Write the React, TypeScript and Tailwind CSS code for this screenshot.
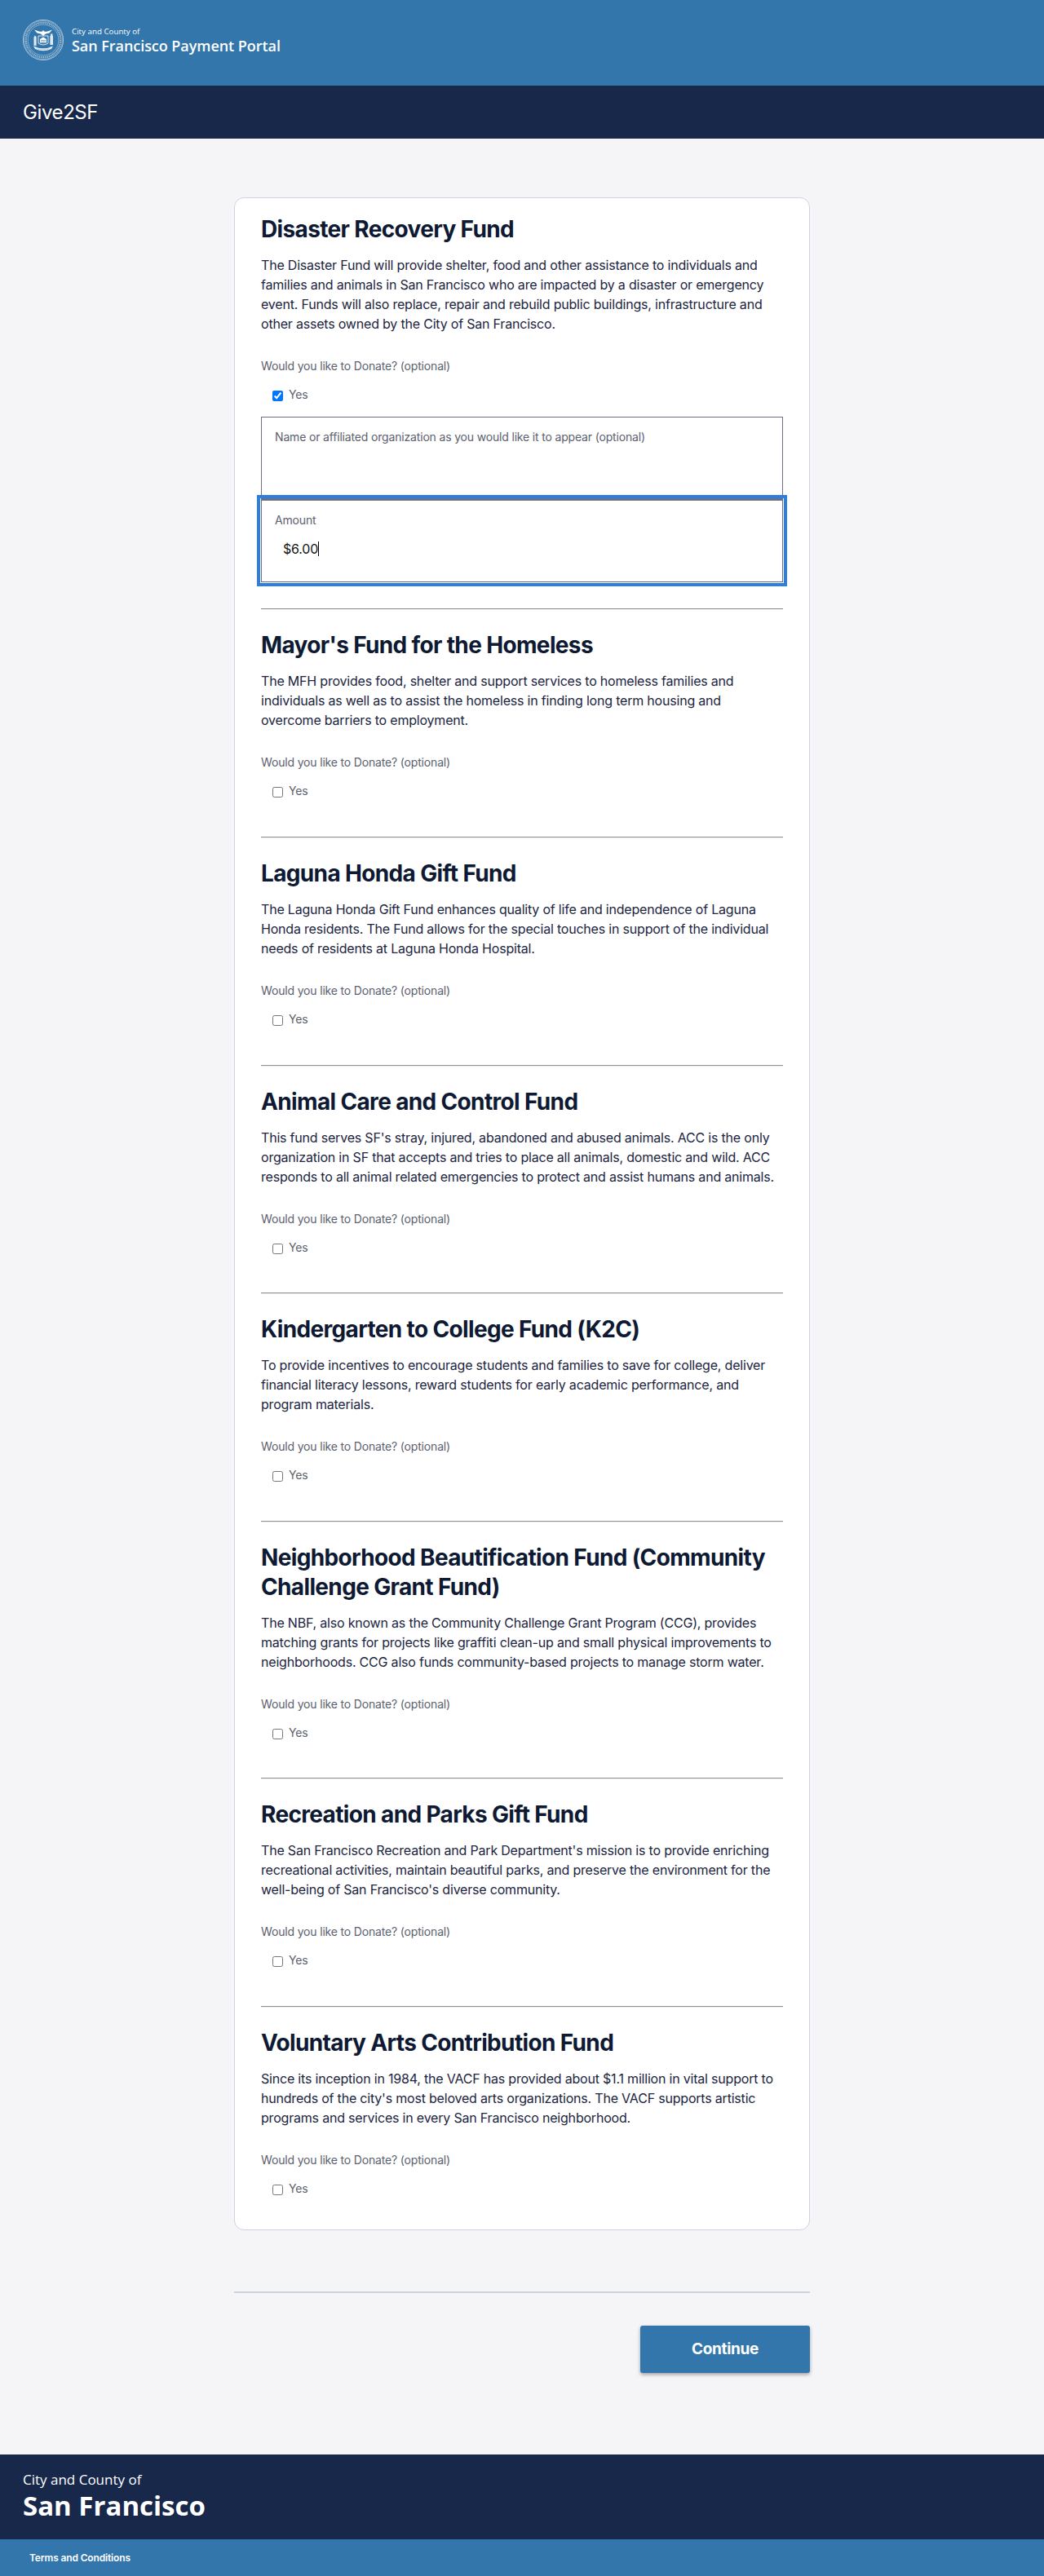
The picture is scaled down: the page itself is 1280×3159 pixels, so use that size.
const body = "font-['Inter','Liberation_Sans',sans-serif]";
const brand = "font-['Open_Sans','Noto_Sans',sans-serif]";

const funds = [
  {
    title: "Mayor's Fund for the Homeless",
    text: "The MFH provides food, shelter and support services to homeless families and individuals as well as to assist the homeless in finding long term housing and overcome barriers to employment.",
  },
  {
    title: "Laguna Honda Gift Fund",
    text: "The Laguna Honda Gift Fund enhances quality of life and independence of Laguna Honda residents. The Fund allows for the special touches in support of the individual needs of residents at Laguna Honda Hospital.",
  },
  {
    title: "Animal Care and Control Fund",
    text: "This fund serves SF's stray, injured, abandoned and abused animals. ACC is the only organization in SF that accepts and tries to place all animals, domestic and wild. ACC responds to all animal related emergencies to protect and assist humans and animals.",
  },
  {
    title: "Kindergarten to College Fund (K2C)",
    text: "To provide incentives to encourage students and families to save for college, deliver financial literacy lessons, reward students for early academic performance, and program materials.",
  },
  {
    title: "Neighborhood Beautification Fund (Community Challenge Grant Fund)",
    text: "The NBF, also known as the Community Challenge Grant Program (CCG), provides matching grants for projects like graffiti clean-up and small physical improvements to neighborhoods. CCG also funds community-based projects to manage storm water.",
  },
  {
    title: "Recreation and Parks Gift Fund",
    text: "The San Francisco Recreation and Park Department's mission is to provide enriching recreational activities, maintain beautiful parks, and preserve the environment for the well-being of San Francisco's diverse community.",
  },
  {
    title: "Voluntary Arts Contribution Fund",
    text: "Since its inception in 1984, the VACF has provided about $1.1 million in vital support to hundreds of the city's most beloved arts organizations. The VACF supports artistic programs and services in every San Francisco neighborhood.",
  },
];

const Seal = () => (
  <svg viewBox="0 0 50 50" className="w-[50px] h-[50px] shrink-0" fill="none">
    <circle cx="25" cy="25" r="24.6" stroke="white" strokeWidth="0.6" />
    <circle cx="25" cy="25" r="23.5" stroke="white" strokeWidth="0.3" />
    <circle cx="25" cy="25" r="21.3" stroke="white" strokeWidth="2.4" strokeDasharray="0.8 0.9" opacity="0.65" />
    <circle cx="25" cy="25" r="18.9" stroke="white" strokeWidth="0.4" />
    {/* eagle */}
    <path d="M14 12.5 L20.5 14.8 L23.5 14.8 L25 13 L26.5 14.8 L29.5 14.8 L36 12.5 L32.5 16.6 L28 17.6 L25 20 L22 17.6 L17.5 16.6 Z" fill="white" />
    {/* shield */}
    <path d="M19 20 H31 V29 Q25 33 19 29 Z" stroke="white" strokeWidth="0.8" />
    <path d="M21 24 L25 21.5 L29 24 V28.5 H21 Z" fill="white" />
    <path d="M22 25.5 H28 M22 27.3 H28" stroke="#3376ab" strokeWidth="0.6" />
    {/* figure and tower */}
    <path d="M13.5 21.5 L15 19.5 L16.6 21.5 V32 H13.5 Z" fill="white" opacity="0.85" />
    <path d="M34 17.5 H36.5 V20 H37 V31 H33.4 V20 H34 Z" fill="white" opacity="0.85" />
    {/* ships and scroll */}
    <path d="M13 32.5 Q25 38 37 32.5 L35 36 Q25 40.5 15 36 Z" fill="white" opacity="0.9" />
    <path d="M17 34.8 H33 M19 36.6 H31" stroke="#3376ab" strokeWidth="0.45" strokeDasharray="1 0.6" />
  </svg>
);

const DonateChoice = ({ checked = false }: { checked?: boolean }) => (
  <div>
    <p className="text-sm leading-5 tracking-[-0.17px] text-[#5b616e] mt-[30px]">Would you like to Donate? (optional)</p>
    <label className="flex items-center h-5 mt-[15px] pl-[14px] text-sm tracking-[-0.17px] text-[#5b616e]">
      <input type="checkbox" defaultChecked={checked} className="w-[13px] h-[13px] mt-[3px]" />
      <span className="ml-[7px]">Yes</span>
    </label>
  </div>
);

const FundHead = ({ title, text }: { title: string; text: string }) => (
  <div>
    <h2 className="text-[28px] leading-9 tracking-[-0.65px] font-bold text-[#0e1a33]">{title}</h2>
    <p className="mt-[14px] text-base leading-6 tracking-[-0.2px] text-[#1b2540]">{text}</p>
  </div>
);

export default function App() {
  return (
    <div className={`min-h-[3159px] flex flex-col bg-[#f5f5f8] ${body}`}>
      <header className="h-[105px] bg-[#3376ab] flex items-start pt-6 px-7 text-white">
        <Seal />
        <div className={`ml-[10px] pt-[8px] ${brand}`}>
          <div className="text-[9.75px] leading-[14px]">City and County of</div>
          <div className="text-[18px] leading-[20px] tracking-[-0.05px] font-semibold">San Francisco Payment Portal</div>
        </div>
      </header>
      <div className="h-[65px] bg-[#18284b] flex items-center px-7 text-2xl tracking-[-0.4px] text-white">Give2SF</div>

      <main className="w-[706px] mx-auto mt-[72px]">
        <div className="bg-white border border-[#cdd3e2] rounded-xl px-8 pt-5 pb-[40px]">
          <section>
            <FundHead
              title="Disaster Recovery Fund"
              text="The Disaster Fund will provide shelter, food and other assistance to individuals and families and animals in San Francisco who are impacted by a disaster or emergency event. Funds will also replace, repair and rebuild public buildings, infrastructure and other assets owned by the City of San Francisco."
            />
            <DonateChoice checked />
            <div className="mt-[17px]">
              <div className="h-[101px] border border-[#6b7080] px-4 pt-[14px] text-sm leading-5 tracking-[-0.17px] text-[#5b616e]">
                Name or affiliated organization as you would like it to appear (optional)
              </div>
              <div className="h-[102px] border border-t-2 border-[#6b7080] px-4 pt-[14px] outline-4 outline-offset-[1px] outline-[#2b7fe0] relative">
                <div className="text-sm leading-5 tracking-[-0.17px] text-[#5b616e]">Amount</div>
                <div className="mt-[13px] ml-[10px] flex items-center h-6 text-base tracking-[-0.2px] text-[#111]">
                  $6.00<span className="w-px h-[18px] bg-black" />
                </div>
              </div>
            </div>
          </section>
          {funds.map((fund, i) => (
            <section key={fund.title}>
              <hr className={`h-0 border-t border-b border-t-[#8f9299] border-b-[#eeeeee] ${i === 0 ? "mt-[32.4px]" : "mt-[45.6px]"} mb-[25px]`} />
              <FundHead title={fund.title} text={fund.text} />
              <DonateChoice />
            </section>
          ))}
        </div>

        <hr className="border-0 h-0.5 bg-[#cdd2e0] mt-[75px]" />
        <div className="flex justify-end mt-10">
          <button className="w-[208px] h-[58px] rounded-[3px] bg-[#3376ab] text-white text-[19px] tracking-[-0.3px] font-bold shadow-[0_2px_4px_rgba(0,0,0,0.35)]">
            Continue
          </button>
        </div>
      </main>

      <footer className="mt-auto">
        <div className={`h-[104px] bg-[#18284b] px-7 pt-[19px] text-white ${brand}`}>
          <div className="text-[17px] leading-6">City and County of</div>
          <div className="text-[33px] leading-10 font-bold">San Francisco</div>
        </div>
        <div className="h-[45px] bg-[#3376ab] flex items-center pl-9 text-xs tracking-[-0.15px] font-semibold text-white">Terms and Conditions</div>
      </footer>
    </div>
  );
}
